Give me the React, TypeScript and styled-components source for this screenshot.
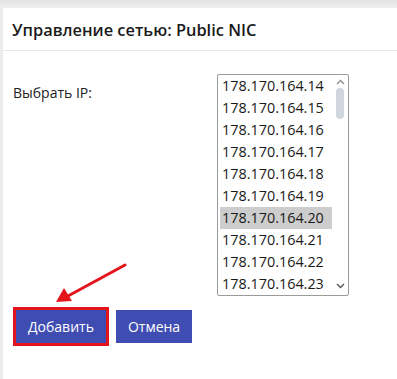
import React from "react";
import styled, { createGlobalStyle } from "styled-components";

const Global = createGlobalStyle`
  html, body { margin: 0; padding: 0; background: #ffffff; }
  body { font-family: "Open Sans", "Noto Sans", sans-serif; color: #1f1f1f; }
  * { box-sizing: border-box; }
`;

const Page = styled.div`
  position: relative;
  width: 397px;
  height: 379px;
  overflow: hidden;
  display: flex;
  flex-direction: column;
`;

const TopBand = styled.div`
  height: 8px;
  background: linear-gradient(#e4e4e4, #efefef);
`;

const Frame = styled.div`
  flex: 1;
  border-left: 3px solid #ececec;
  display: flex;
  flex-direction: column;
`;

const Header = styled.div`
  height: 43px;
  padding-left: 9px;
  display: flex;
  align-items: center;
  border-bottom: 1px solid #e8e8e8;
`;

const Title = styled.h1`
  margin: 0;
  font-size: 16.4px;
  font-weight: 600;
  color: #1a1a1a;
`;

const Content = styled.div`
  padding: 23px 0 0 10px;
  display: flex;
  flex-direction: column;
`;

const FieldRow = styled.div`
  display: grid;
  grid-template-columns: 204px 132px;
`;

const Label = styled.label`
  padding-top: 9px;
  font-size: 14px;
  color: #222;
`;

const ListBox = styled.div`
  height: 222px;
  border: 1px solid #9b9b9b;
  border-radius: 2px;
  display: flex;
  padding-left: 2px;
  background: #fff;
`;

const Options = styled.div`
  flex: 1;
  display: flex;
  flex-direction: column;
`;

const Option = styled.div<{ $selected?: boolean }>`
  height: 22px;
  line-height: 22px;
  padding-left: 2px;
  font-size: 14.4px;
  color: #1a1a1a;
  background: ${(p) => (p.$selected ? "#cdcdcd" : "transparent")};
  white-space: nowrap;
`;

const ScrollBar = styled.div`
  width: 16px;
  display: flex;
  flex-direction: column;
  align-items: center;
  padding-top: 4px;
`;

const Thumb = styled.div`
  width: 8px;
  height: 31px;
  margin-top: 3px;
  border-radius: 4px;
  background: #cfd6de;
`;

const Spacer = styled.div`
  flex: 1;
`;

const ArrowBox = styled.div`
  height: 14px;
  display: flex;
  align-items: center;
  justify-content: center;
  margin-bottom: 2px;
`;

const ButtonRow = styled.div`
  display: flex;
  gap: 10px;
  margin: 14px 0 0 3px;
`;

const Button = styled.button<{ $marked?: boolean }>`
  height: 33px;
  padding: 0 12px;
  border: none;
  border-radius: 0;
  background: #3f4db3;
  color: #ffffff;
  font-family: "Open Sans", "Noto Sans", sans-serif;
  font-size: 14px;
  outline: ${(p) => (p.$marked ? "3px solid #e3141b" : "none")};
  cursor: pointer;
`;

const Annotation = styled.svg`
  position: absolute;
  left: 0;
  top: 0;
  pointer-events: none;
`;

const ips = [14, 15, 16, 17, 18, 19, 20, 21, 22, 23].map((n) => `178.170.164.${n}`);

export default function App() {
  return (
    <>
      <Global />
      <Page>
        <TopBand />
        <Frame>
          <Header>
            <Title>Управление сетью: Public NIC</Title>
          </Header>
          <Content>
            <FieldRow>
              <Label>Выбрать IP:</Label>
              <ListBox>
                <Options>
                  {ips.map((ip) => (
                    <Option key={ip} $selected={ip.endsWith(".20")}>
                      {ip}
                    </Option>
                  ))}
                </Options>
                <ScrollBar>
                  <svg width="9" height="6" viewBox="0 0 9 6">
                    <path d="M1 5 L4.5 1.5 L8 5" fill="none" stroke="#8a8a8a" strokeWidth="1.3" />
                  </svg>
                  <Thumb />
                  <Spacer />
                  <ArrowBox>
                    <svg width="9" height="6" viewBox="0 0 9 6">
                      <path d="M1 1 L4.5 4.5 L8 1" fill="none" stroke="#555" strokeWidth="1.4" />
                    </svg>
                  </ArrowBox>
                </ScrollBar>
              </ListBox>
            </FieldRow>
            <ButtonRow>
              <Button $marked>Добавить</Button>
              <Button>Отмена</Button>
            </ButtonRow>
          </Content>
        </Frame>
        <Annotation width="397" height="379" viewBox="0 0 397 379">
          <line x1="125" y1="265" x2="68" y2="296" stroke="#e3141b" strokeWidth="3" strokeLinecap="round" />
          <polygon points="56,302 64,288 72,301" fill="#e3141b" />
        </Annotation>
      </Page>
    </>
  );
}
